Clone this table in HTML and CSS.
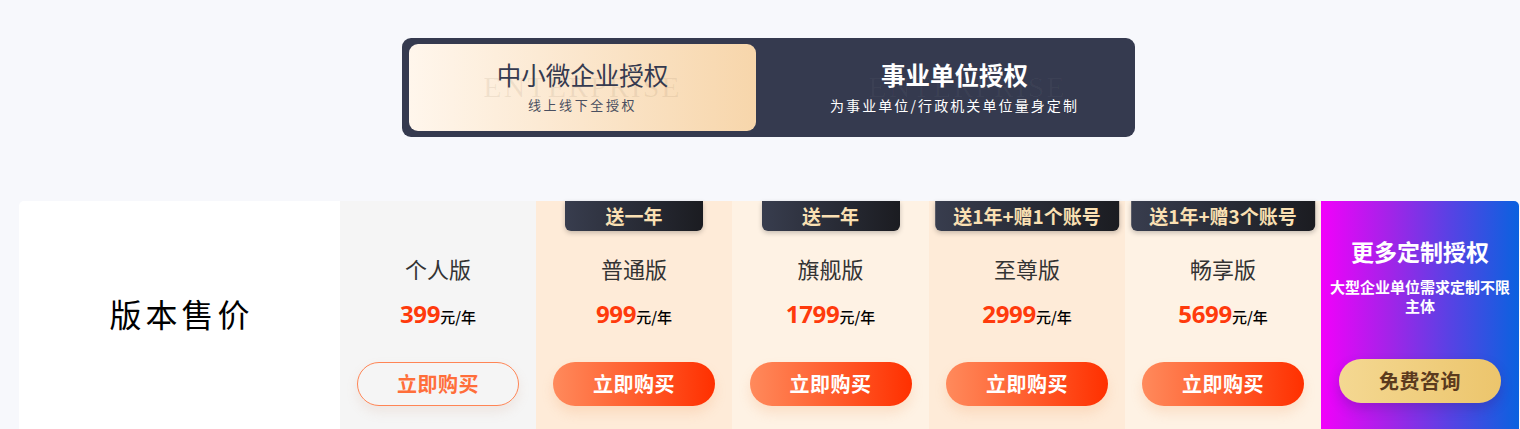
FILE: index.html
```html
<!DOCTYPE html>
<html lang="zh-CN">
<head>
<meta charset="utf-8">
<title>版本售价</title>
<link rel="stylesheet" href="styles.css">
</head>
<body>
<div class="page">
  <div class="tabs">
    <div class="tab tab-active">
      <span class="watermark">ENTERPRISE</span>
      <div class="tab-title">中小微企业授权</div>
      <div class="tab-sub">线上线下全授权</div>
    </div>
    <div class="tab tab-dark">
      <span class="watermark watermark-dark">ENTERPRISE</span>
      <div class="tab-title">事业单位授权</div>
      <div class="tab-sub">为事业单位/行政机关单位量身定制</div>
    </div>
  </div>

  <div class="pricing">
    <div class="label-cell"><div class="label">版本售价</div></div>

    <div class="plan plan-gray">
      <div class="plan-name">个人版</div>
      <div class="price"><span class="num">399</span><span class="unit">元/年</span></div>
      <div class="btn btn-outline">立即购买</div>
    </div>

    <div class="plan plan-a">
      <div class="badge">送一年</div>
      <div class="plan-name">普通版</div>
      <div class="price"><span class="num">999</span><span class="unit">元/年</span></div>
      <div class="btn btn-fill">立即购买</div>
    </div>

    <div class="plan plan-b">
      <div class="badge">送一年</div>
      <div class="plan-name">旗舰版</div>
      <div class="price"><span class="num">1799</span><span class="unit">元/年</span></div>
      <div class="btn btn-fill">立即购买</div>
    </div>

    <div class="plan plan-a">
      <div class="badge">送1年+赠1个账号</div>
      <div class="plan-name">至尊版</div>
      <div class="price"><span class="num">2999</span><span class="unit">元/年</span></div>
      <div class="btn btn-fill">立即购买</div>
    </div>

    <div class="plan plan-b">
      <div class="badge">送1年+赠3个账号</div>
      <div class="plan-name">畅享版</div>
      <div class="price"><span class="num">5699</span><span class="unit">元/年</span></div>
      <div class="btn btn-fill">立即购买</div>
    </div>

    <div class="plan plan-custom">
      <div class="custom-title">更多定制授权</div>
      <div class="custom-sub">大型企业单位需求定制不限主体</div>
      <div class="btn btn-gold">免费咨询</div>
    </div>
  </div>
</div>
</body>
</html>
```

FILE: styles.css
```css
* { box-sizing: border-box; }
html, body {
  margin: 0;
  padding: 0;
  background: #f7f8fc;
  font-family: "Noto Sans CJK SC", "Noto Sans", sans-serif;
  overflow: hidden;
}
.page {
  width: 1500px;
  margin-left: 19px;
  padding-top: 38px;
}
.tabs {
  width: 733px;
  height: 99px;
  margin-left: 383px;
  background: #353a4f;
  border-radius: 9px;
  padding: 6px 7px;
  display: flex;
  gap: 25px;
}
.tab {
  position: relative;
  width: 347px;
  height: 87px;
  border-radius: 9px;
  display: flex;
  flex-direction: column;
  align-items: center;
  justify-content: center;
  gap: 6px;
  overflow: hidden;
}
.tab-active {
  background: linear-gradient(90deg, #fff6ec 0%, #fbe6cc 50%, #f7d6ab 100%);
  color: #353a4f;
}
.tab-dark { color: #ffffff; }
.watermark {
  position: absolute;
  left: 0;
  right: 0;
  top: 25px;
  text-align: center;
  font-family: "Liberation Serif", serif;
  font-size: 30px;
  letter-spacing: 2px;
  color: rgba(110, 80, 50, 0.09);
  line-height: 36px;
}
.watermark-dark { color: rgba(255, 255, 255, 0.03); left: 26px; }
.tab-title {
  position: relative;
  font-size: 24.5px;
  line-height: 30px;
  margin-top: -2px;
}
.tab-dark .tab-title { font-weight: 700; }
.tab-sub {
  position: relative;
  font-size: 13px;
  line-height: 18px;
  letter-spacing: 2.6px;
  color: #4a4f60;
}
.tab-dark .tab-sub {
  color: #ffffff;
  font-size: 14px;
  letter-spacing: 2.1px;
}

.pricing {
  margin-top: 64px;
  display: grid;
  grid-template-columns: 321px 196px 196px 197px 196px 196px 1fr;
  height: 240px;
}
.label-cell {
  background: #ffffff;
  border-top-left-radius: 5px;
  padding-top: 92px;
  text-align: center;
}
.label {
  font-size: 32px;
  line-height: 40px;
  letter-spacing: 4px;
  color: #000000;
  padding-left: 4px;
}
.plan {
  position: relative;
  display: flex;
  flex-direction: column;
  align-items: center;
  padding-top: 53px;
}
.plan-gray { background: #f5f5f5; }
.plan-a { background: #feebd8; }
.plan-b { background: #fef2e4; }
.badge {
  position: absolute;
  top: 0;
  left: 50%;
  transform: translateX(-50%);
  min-width: 138px;
  height: 30px;
  padding: 0 18px;
  white-space: nowrap;
  text-align: center;
  line-height: 30px;
  font-size: 19px;
  font-weight: 700;
  color: #fae0b3;
  background: linear-gradient(90deg, #383d4e 0%, #1b1c21 100%);
  border-radius: 0 0 6px 6px;
  box-shadow: 0 2px 5px rgba(0, 0, 0, 0.22);
}
.plan-name {
  font-size: 22px;
  line-height: 28px;
  color: #333333;
}
.price {
  margin-top: 17px;
  line-height: 30px;
  height: 30px;
  display: flex;
  align-items: baseline;
}
.num {
  font-family: "Open Sans", "Noto Sans", sans-serif;
  font-weight: 700;
  font-size: 24px;
  color: #ff3a0c;
  letter-spacing: -0.3px;
}
.unit {
  font-size: 15px;
  color: #000000;
  font-weight: 500;
}
.btn {
  margin-top: 33px;
  width: 162px;
  height: 44px;
  border-radius: 22px;
  text-align: center;
  line-height: 44px;
  font-size: 20px;
  font-weight: 700;
  letter-spacing: 0.5px;
}
.btn-outline {
  border: 1px solid #ff8555;
  line-height: 42px;
  color: #ff6e3a;
  box-shadow: 0 6px 12px rgba(200, 150, 120, 0.15);
}
.btn-fill {
  color: #ffffff;
  background: linear-gradient(90deg, #ff8a5c 0%, #ff5a2a 55%, #ff3000 100%);
  box-shadow: 0 7px 12px rgba(240, 160, 100, 0.22);
}
.plan-custom {
  background: linear-gradient(90deg, #f200fb 0%, #a224e8 35%, #5842e4 65%, #0a62df 100%);
  border-top-right-radius: 5px;
  padding-top: 36px;
  color: #ffffff;
  text-align: center;
}
.custom-title {
  font-size: 23px;
  line-height: 28px;
  font-weight: 700;
}
.custom-sub {
  margin-top: 12px;
  padding: 0 6px;
  font-size: 15px;
  line-height: 19px;
  font-weight: 700;
}
.btn-gold {
  margin-top: 44px;
  color: #5b3a1e;
  background: linear-gradient(90deg, #f4d892 0%, #ecc56c 100%);
  box-shadow: 0 6px 12px rgba(60, 20, 120, 0.25);
}
```
